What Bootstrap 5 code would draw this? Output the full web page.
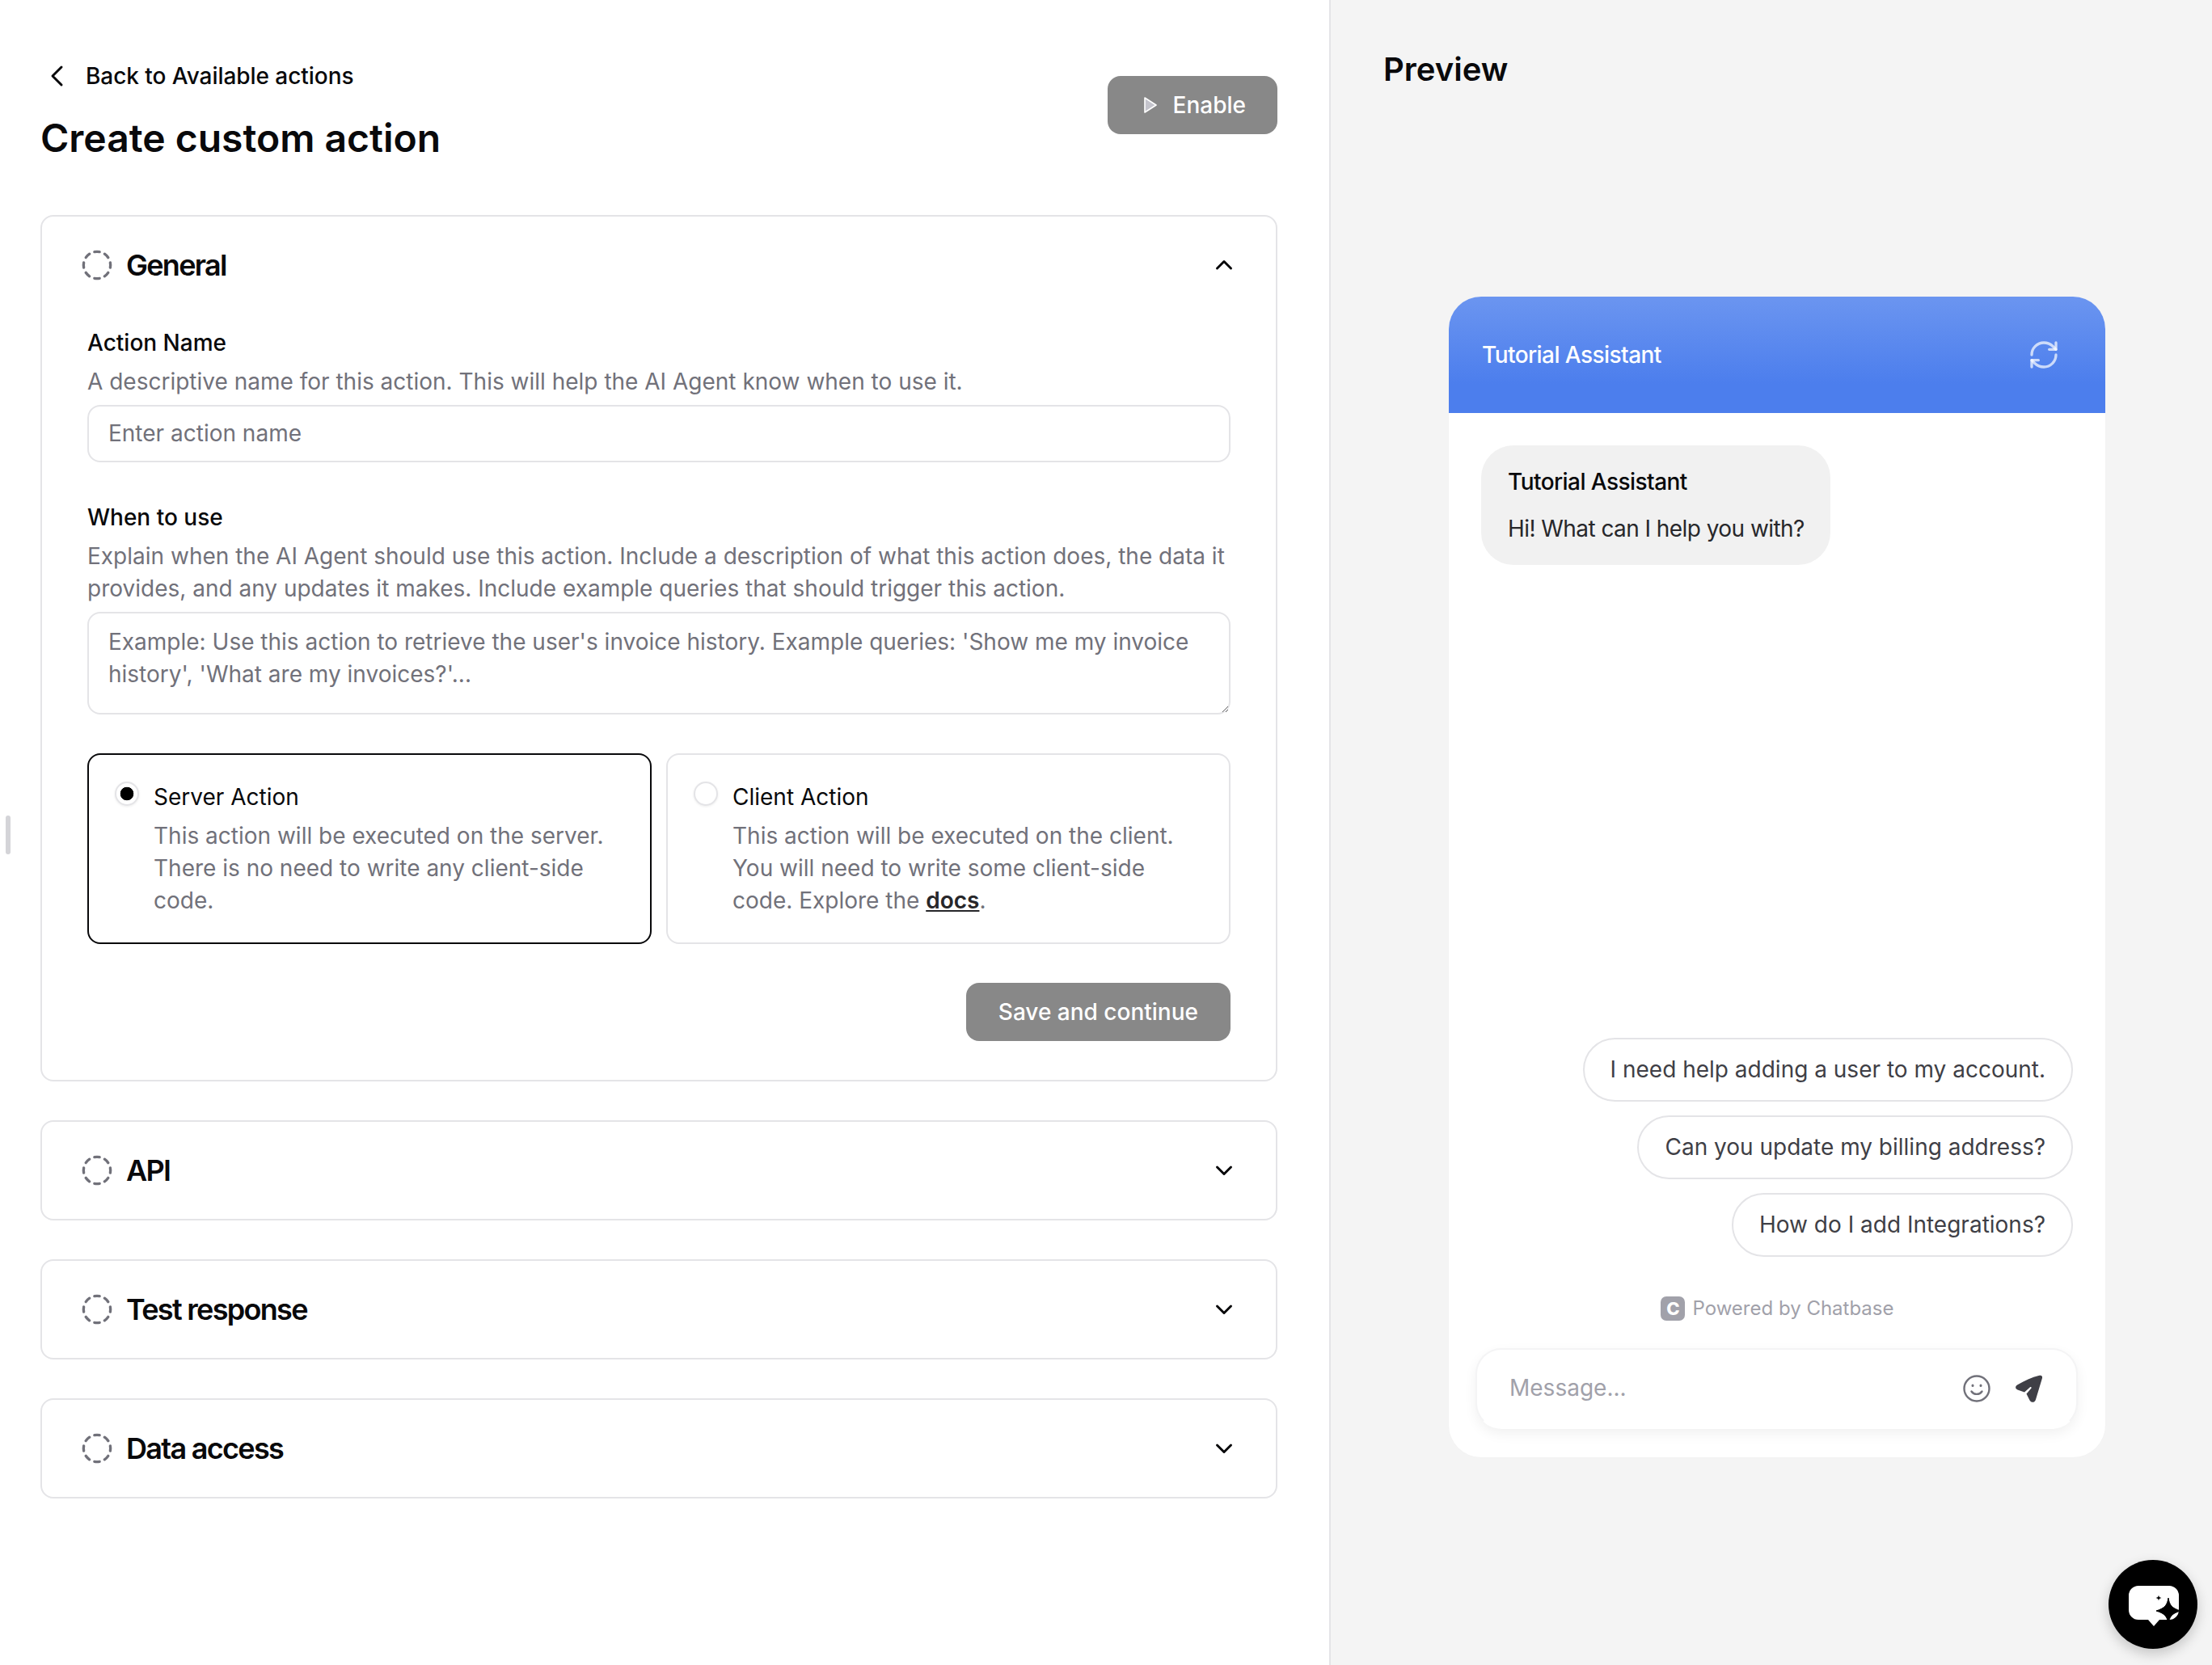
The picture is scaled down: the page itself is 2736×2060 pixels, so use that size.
<!DOCTYPE html>
<html lang="en">
<head>
    <meta charset="UTF-8">
    <title>Create custom action</title>
    <link href="https://cdn.jsdelivr.net/npm/bootstrap@5.3.0/dist/css/bootstrap.min.css" rel="stylesheet">
    <style>
        /* page */
        body { font-family: "Inter", "Liberation Sans", sans-serif; font-size: 28px; line-height: 40px; color: #09090b; background: #fff; }
        .page-wrap { width: 2736px; height: 2060px; overflow: hidden; position: relative; }
        .pane-left { width: 1646px; flex: none; border-right: 2px solid #e4e4e7; padding: 77px 64px 0 50px; }
        .pane-right { flex: 1; background: #f4f4f4; padding: 62px 0 0 65px; }

        /* header of the form */
        .back-row { height: 34px; gap: 20px; margin-left: 4px; font-weight: 500; line-height: 34px; color: #09090b; text-decoration: none; letter-spacing: -0.05px; }
        .page-title { font-size: 48px; line-height: 58px; font-weight: 600; margin: 31px 0 66px; }
        .grey-btn { --bs-btn-bg: #888; background: #888; border: 0; color: #fff; height: 72px; border-radius: 16px; font-size: 28px; font-weight: 500; line-height: 40px; padding: 0 40px; }
        .grey-btn:hover { background: #888; color: #fff; }
        .enable-btn { margin-top: 17px; padding-left: 45px; padding-right: 39px; gap: 20px; }

        /* sections */
        .step-card { border: 2px solid #e4e4e7; border-radius: 16px; margin-bottom: 48px; }
        .step-head { height: 120px; padding: 0 48px 0 48px; gap: 16px; }
        .step-name { font-size: 36px; line-height: 48px; font-weight: 600; letter-spacing: -1.7px; }
        .step-body { padding: 16px 56px 48px 56px; }
        .field-label { font-weight: 500; line-height: 40px; margin: 0; }
        .field-help { color: #71717a; line-height: 40px; margin: 8px 0 9px; }
        .field-input.form-control { border: 2px solid #e4e4e7; border-radius: 16px; font-size: 28px; line-height: 40px; padding: 13px 24px 15px; color: #09090b; box-shadow: none; }
        .field-input::placeholder { color: #71717a; opacity: 1; }
        .one-line { height: 71px; margin-bottom: 48px; }
        .field-input.many-lines { height: 127px; padding-top: 15px; margin-bottom: 48px; }

        /* server / client choice */
        .choice-row { gap: 18px; }
        .choice-box { flex: 1; height: 236px; border: 2px solid #e4e4e7; border-radius: 16px; padding: 32px 30px 0 32px; gap: 18px; }
        .choice-box.picked { border-color: #09090b; }
        .choice-radio.form-check-input { width: 30px; height: 30px; margin: 1px 0 0; flex: none; border: 2px solid #e4e4e7; background-color: #fff; box-shadow: 0 1px 3px rgba(0,0,0,.08); }
        .choice-radio.form-check-input:checked[type=radio] { background-color: #fff; border-color: #e4e4e7; background-image: radial-gradient(circle, #000 0 8px, transparent 8.6px); }
        .choice-title { color: #09090b; margin-bottom: 8px; }
        .choice-text { color: #71717a; }
        .choice-text a { color: #27272a; font-weight: 600; }
        .save-row { margin-top: 48px; }

        /* preview */
        .preview-title { font-size: 40px; line-height: 48px; font-weight: 600; margin: 0; }
        .chat-window { width: 812px; height: 1436px; margin: 257px 0 0 81px; background: #fff; border-radius: 40px; box-shadow: 0 0 4px rgba(0,0,0,.01); overflow: hidden; }
        .chat-head { height: 144px; flex: none; padding: 0 56px 0 41px; color: #fff; font-weight: 500; letter-spacing: -0.56px; background: linear-gradient(#6b95f0, #4c7eed 75%); }
        .chat-bubble { width: fit-content; background: #f1f1f1; border-radius: 40px; margin: 40px 0 0 40px; padding: 25px 32px 25px 33px; color: #27272a; line-height: 40px; letter-spacing: -0.56px; }
        .chat-bubble-name { color: #09090b; font-weight: 500; margin-bottom: 18px; }
        .ask-list { gap: 17px; padding-right: 40px; }
        .ask-pill { height: 79px; border: 2px solid #e4e4e7; border-radius: 40px; padding: 0 32px; background: #fff; color: #3f3f46; line-height: 75px; white-space: nowrap; }
        .powered-row { font-size: 24px; line-height: 30px; color: #a1a1aa; gap: 9px; margin: 49px 0 34px 1px; height: 30px; }
        .powered-logo { width: 30px; height: 30px; border-radius: 7px; background: #a1a1aa; color: #fff; font-weight: 800; font-size: 22px; line-height: 30px; text-align: center; }
        .msg-box { height: 100px; flex: none; margin: 0 34px 35px 33px; border: 2px solid #f4f4f5; border-bottom-color: transparent; border-radius: 32px; padding: 0 42px 0 40px; gap: 30px; box-shadow: 0 6px 16px rgba(0,0,0,.06); background: #fff; }
        .msg-input.form-control { border: 0; padding: 0 0 2px; font-size: 28px; background: transparent; box-shadow: none; flex: 1; }
        .msg-input::placeholder { color: #a1a1aa; opacity: 1; }

        /* floating items */
        .chat-fab { position: absolute; left: 2608px; top: 1930px; width: 110px; height: 110px; border-radius: 50%; background: #000; border: 0; padding: 0; box-shadow: 0 6px 16px rgba(0,0,0,.2); }
        .fab-icon { margin: 6px 0 0 6px; }
        .drag-grip { position: absolute; left: 7px; top: 1009px; width: 6px; height: 48px; border-radius: 3px; background: #d4d4d8; }
    </style>
</head>
<body>
<div class="page-wrap d-flex">
    <div class="pane-left">
        <div class="d-flex justify-content-between align-items-start">
            <div>
                <a href="#" class="back-row d-flex align-items-center">
                    <svg width="32" height="32" viewBox="0 0 32 32" fill="none" stroke="#09090b" stroke-width="3" stroke-linecap="round" stroke-linejoin="round"><path d="M22 5 11 16l11 11"/></svg>
                    Back to Available actions
                </a>
                <h1 class="page-title">Create custom action</h1>
            </div>
            <button class="btn grey-btn enable-btn d-inline-flex align-items-center">
                <svg width="16" height="20" viewBox="0 0 16 20"><path d="M1 1 15 10 1 19z" fill="#c4c4cc" stroke="#fff" stroke-width="1.600" stroke-linejoin="round"/></svg>
                Enable
            </button>
        </div>

        <div class="card step-card">
            <div class="step-head d-flex align-items-center">
                <svg width="40" height="40" viewBox="0 0 24 24" fill="none" stroke="#71717a" stroke-width="2" stroke-linecap="round"><path d="M10.1 2.182a10 10 0 0 1 3.8 0"/><path d="M13.9 21.818a10 10 0 0 1-3.8 0"/><path d="M17.609 3.721a10 10 0 0 1 2.69 2.7"/><path d="M2.182 13.9a10 10 0 0 1 0-3.8"/><path d="M20.279 17.609a10 10 0 0 1-2.7 2.69"/><path d="M21.818 10.1a10 10 0 0 1 0 3.8"/><path d="M3.721 6.391a10 10 0 0 1 2.7-2.69"/><path d="M6.391 20.279a10 10 0 0 1-2.69-2.7"/></svg>
                <span class="step-name flex-grow-1">General</span>
                <svg width="32" height="32" viewBox="0 0 32 32" fill="none" stroke="#09090b" stroke-width="3" stroke-linecap="round" stroke-linejoin="round"><path d="M7.5 20 16 11.5l8.500 8.500"/></svg>
            </div>
            <div class="step-body">
                <label class="field-label d-block">Action Name</label>
                <p class="field-help">A descriptive name for this action. This will help the AI Agent know when to use it.</p>
                <input type="text" class="form-control field-input one-line" placeholder="Enter action name">

                <label class="field-label d-block">When to use</label>
                <p class="field-help">Explain when the AI Agent should use this action. Include a description of what this action does, the data it provides, and any updates it makes. Include example queries that should trigger this action.</p>
                <textarea class="form-control field-input many-lines" placeholder="Example: Use this action to retrieve the user's invoice history. Example queries: 'Show me my invoice history', 'What are my invoices?'..."></textarea>

                <div class="choice-row d-flex">
                    <div class="choice-box picked d-flex">
                        <input class="form-check-input choice-radio" type="radio" name="actionType" checked>
                        <div>
                            <div class="choice-title">Server Action</div>
                            <div class="choice-text">This action will be executed on the server. There is no need to write any client-side code.</div>
                        </div>
                    </div>
                    <div class="choice-box d-flex">
                        <input class="form-check-input choice-radio" type="radio" name="actionType">
                        <div>
                            <div class="choice-title">Client Action</div>
                            <div class="choice-text">This action will be executed on the client. You will need to write some client-side code. Explore the <a href="#">docs</a>.</div>
                        </div>
                    </div>
                </div>

                <div class="save-row d-flex justify-content-end">
                    <button class="btn grey-btn">Save and continue</button>
                </div>
            </div>
        </div>

        <div class="card step-card">
            <div class="step-head d-flex align-items-center">
                <svg width="40" height="40" viewBox="0 0 24 24" fill="none" stroke="#71717a" stroke-width="2" stroke-linecap="round"><path d="M10.1 2.182a10 10 0 0 1 3.8 0"/><path d="M13.9 21.818a10 10 0 0 1-3.8 0"/><path d="M17.609 3.721a10 10 0 0 1 2.69 2.7"/><path d="M2.182 13.9a10 10 0 0 1 0-3.8"/><path d="M20.279 17.609a10 10 0 0 1-2.7 2.69"/><path d="M21.818 10.1a10 10 0 0 1 0 3.8"/><path d="M3.721 6.391a10 10 0 0 1 2.7-2.69"/><path d="M6.391 20.279a10 10 0 0 1-2.69-2.7"/></svg>
                <span class="step-name flex-grow-1">API</span>
                <svg width="32" height="32" viewBox="0 0 32 32" fill="none" stroke="#09090b" stroke-width="3" stroke-linecap="round" stroke-linejoin="round"><path d="M7.5 12 16 20.500 24.500 12"/></svg>
            </div>
        </div>

        <div class="card step-card">
            <div class="step-head d-flex align-items-center">
                <svg width="40" height="40" viewBox="0 0 24 24" fill="none" stroke="#71717a" stroke-width="2" stroke-linecap="round"><path d="M10.1 2.182a10 10 0 0 1 3.8 0"/><path d="M13.9 21.818a10 10 0 0 1-3.8 0"/><path d="M17.609 3.721a10 10 0 0 1 2.69 2.7"/><path d="M2.182 13.9a10 10 0 0 1 0-3.8"/><path d="M20.279 17.609a10 10 0 0 1-2.7 2.69"/><path d="M21.818 10.1a10 10 0 0 1 0 3.8"/><path d="M3.721 6.391a10 10 0 0 1 2.7-2.69"/><path d="M6.391 20.279a10 10 0 0 1-2.69-2.7"/></svg>
                <span class="step-name flex-grow-1">Test response</span>
                <svg width="32" height="32" viewBox="0 0 32 32" fill="none" stroke="#09090b" stroke-width="3" stroke-linecap="round" stroke-linejoin="round"><path d="M7.5 12 16 20.500 24.500 12"/></svg>
            </div>
        </div>

        <div class="card step-card">
            <div class="step-head d-flex align-items-center">
                <svg width="40" height="40" viewBox="0 0 24 24" fill="none" stroke="#71717a" stroke-width="2" stroke-linecap="round"><path d="M10.1 2.182a10 10 0 0 1 3.8 0"/><path d="M13.9 21.818a10 10 0 0 1-3.8 0"/><path d="M17.609 3.721a10 10 0 0 1 2.69 2.7"/><path d="M2.182 13.9a10 10 0 0 1 0-3.8"/><path d="M20.279 17.609a10 10 0 0 1-2.7 2.69"/><path d="M21.818 10.1a10 10 0 0 1 0 3.8"/><path d="M3.721 6.391a10 10 0 0 1 2.7-2.69"/><path d="M6.391 20.279a10 10 0 0 1-2.69-2.7"/></svg>
                <span class="step-name flex-grow-1">Data access</span>
                <svg width="32" height="32" viewBox="0 0 32 32" fill="none" stroke="#09090b" stroke-width="3" stroke-linecap="round" stroke-linejoin="round"><path d="M7.5 12 16 20.500 24.500 12"/></svg>
            </div>
        </div>
    </div>

    <div class="pane-right">
        <h2 class="preview-title">Preview</h2>
        <div class="chat-window d-flex flex-column">
            <div class="chat-head d-flex align-items-center justify-content-between">
                <span>Tutorial Assistant</span>
                <svg width="40" height="40" viewBox="0 0 24 24" fill="none" stroke="#fff" stroke-opacity=".7" stroke-width="2" stroke-linecap="round" stroke-linejoin="round"><path d="M3 12a9 9 0 0 1 9-9 9.750 9.750 0 0 1 6.740 2.740L21 8"/><path d="M21 3v5h-5"/><path d="M21 12a9 9 0 0 1-9 9 9.750 9.750 0 0 1-6.740-2.740L3 16"/><path d="M8 16H3v5"/></svg>
            </div>
            <div class="chat-bubble">
                <div class="chat-bubble-name">Tutorial Assistant</div>
                <div>Hi! What can I help you with?</div>
            </div>
            <div class="ask-list mt-auto d-flex flex-column align-items-end">
                <div class="ask-pill">I need help adding a user to my account.</div>
                <div class="ask-pill">Can you update my billing address?</div>
                <div class="ask-pill">How do I add Integrations?</div>
            </div>
            <div class="powered-row d-flex justify-content-center align-items-center">
                <span class="powered-logo">C</span>
                <span>Powered by Chatbase</span>
            </div>
            <div class="msg-box d-flex align-items-center">
                <input type="text" class="form-control msg-input" placeholder="Message...">
                <svg width="34" height="34" viewBox="0 0 34 34" fill="none" stroke="#71717a" stroke-width="2.400" stroke-linecap="round"><circle cx="17" cy="17" r="15.500"/><path d="M10.500 20.500c3 4.500 10 4.500 13 0"/><path d="M12 13v.5M22 13v.5" stroke-width="3"/></svg>
                <svg width="34" height="34" viewBox="0 0 34 34"><path d="M30.500.8C33 .2 34.600 1.800 34 4L26 30.500C25 34.500 20.500 35 18.500 31.500L14.500 23.500 20.500 16.500C21 15.500 20 14.600 19 15.200L12 21.500 3.500 18.500C.3 17.300.3 14 3.500 12.300 12 7.500 21 3 30.500.8z" fill="#3f3f46"/></svg>
            </div>
        </div>
    </div>

    <div class="drag-grip"></div>
    <button class="chat-fab d-flex align-items-center justify-content-center" aria-label="Open chat">
        <svg class="fab-icon" width="66" height="52" viewBox="0 0 66 52">
            <path d="M12 0h38a12 12 0 0 1 12 12v18a12 12 0 0 1-12 12H38l-7 8-7-8H12A12 12 0 0 1 0 30V12A12 12 0 0 1 12 0z" fill="#fff"/>
            <path d="M49 15c1.500 9 4 12.500 15 16-11 3.500-13.500 7-15 16-1.500-9-4-12.500-15-16 11-3.500 13.500-7 15-16z" fill="#000" stroke="#000" stroke-width="1"/>
            <path d="M37 11.500c.4 2.300 1.200 3.100 3.500 3.500-2.300.4-3.100 1.200-3.500 3.500-.4-2.300-1.200-3.100-3.500-3.500 2.300-.4 3.100-1.200 3.500-3.500z" fill="#000"/>
        </svg>
    </button>
</div>
<script src="https://cdn.jsdelivr.net/npm/bootstrap@5.3.0/dist/js/bootstrap.bundle.min.js"></script>
</body>
</html>
